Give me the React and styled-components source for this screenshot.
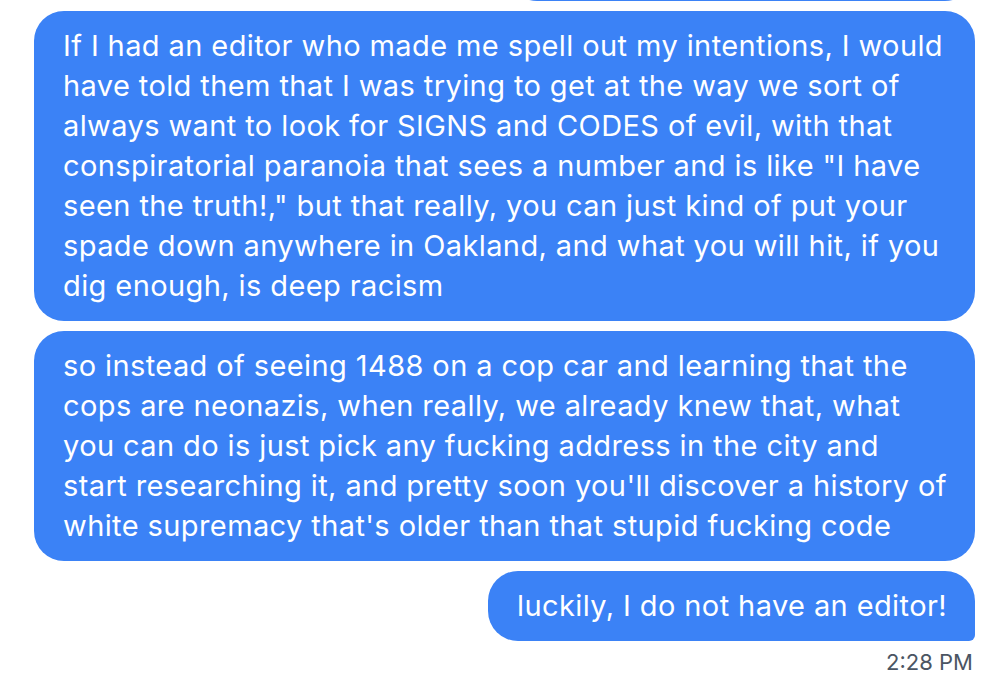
import React from "react";
import styled, { createGlobalStyle } from "styled-components";

const GlobalStyle = createGlobalStyle`
  html, body {
    margin: 0;
    padding: 0;
    background: #ffffff;
    overflow: hidden;
  }
  body {
    font-family: Inter, "Noto Sans", sans-serif;
  }
`;

const Page = styled.div`
  width: 994px;
  height: 692px;
  overflow: hidden;
  background: #ffffff;
`;

const Thread = styled.div`
  display: flex;
  flex-direction: column;
  align-items: flex-end;
  gap: 10px;
  padding: 0 19px 0 34px;
  margin-top: -69px;
`;

const Bubble = styled.div`
  background: #3b82f6;
  color: #ffffff;
  font-size: 29px;
  line-height: 40px;
  letter-spacing: 0.4px;
  padding: 15px 28px 15px 29px;
  border-radius: ${(p) => (p.$last ? "30px 30px 6px 30px" : "30px")};
  max-width: 884px;
`;

const Stamp = styled.div`
  align-self: flex-end;
  margin: -2px 2px 0 0;
  font-size: 22px;
  line-height: 26px;
  color: #4b5563;
`;

const messages = [
  "yeah, that's the thing about it",
  'If I had an editor who made me spell out my intentions, I would have told them that I was trying to get at the way we sort of always want to look for SIGNS and CODES of evil, with that conspiratorial paranoia that sees a number and is like "I have seen the truth!," but that really, you can just kind of put your spade down anywhere in Oakland, and what you will hit, if you dig enough, is deep racism',
  "so instead of seeing 1488 on a cop car and learning that the cops are neonazis, when really, we already knew that, what you can do is just pick any fucking address in the city and start researching it, and pretty soon you'll discover a history of white supremacy that's older than that stupid fucking code",
  "luckily, I do not have an editor!",
];

export default function App() {
  return (
    <Page>
      <GlobalStyle />
      <Thread>
        {messages.map((m, i) => (
          <Bubble key={i} $last={i === messages.length - 1}>
            {m}
          </Bubble>
        ))}
        <Stamp>2:28 PM</Stamp>
      </Thread>
    </Page>
  );
}
